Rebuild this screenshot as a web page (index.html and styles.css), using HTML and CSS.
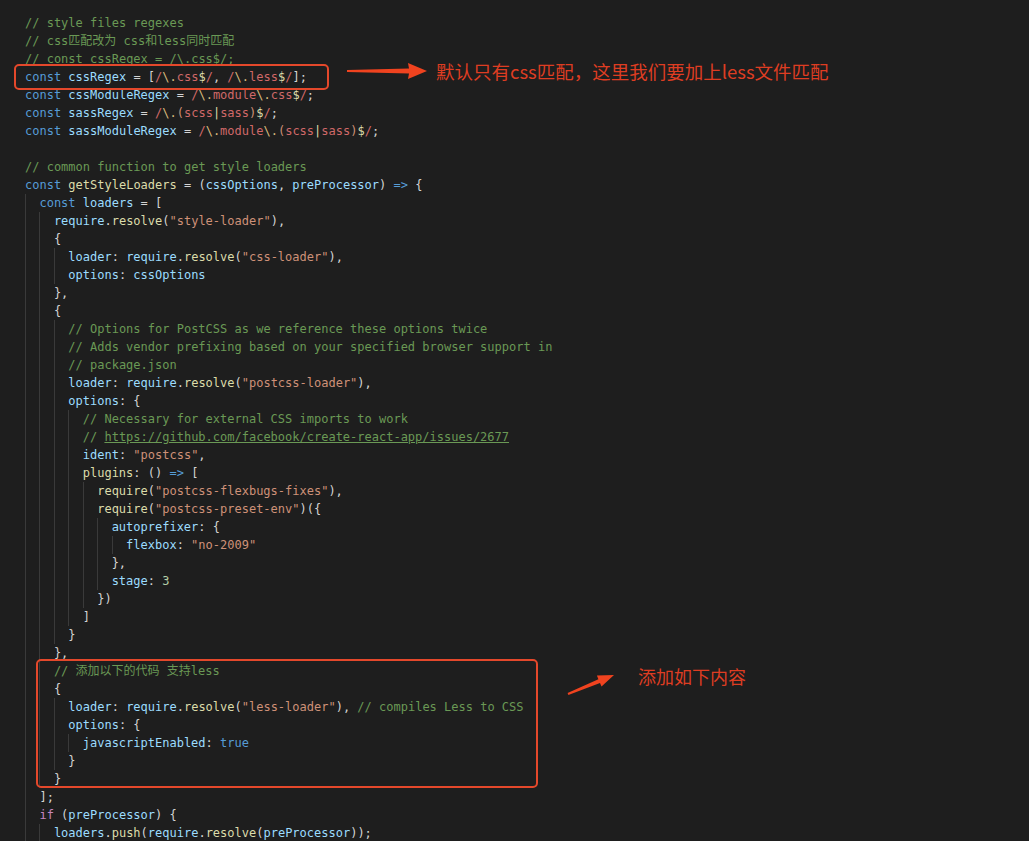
FILE: index.html
```html
<!DOCTYPE html>
<html>
  <head>
    <meta charset="UTF-8" />
    <title>webpack.config.js - less</title>
    <link rel="stylesheet" href="styles.css">
  </head>
  <body>
    <div class="editor">
      <div class="code">
        <div class="ln"><span class="c">// style files regexes</span></div>
        <div class="ln"><span class="c">// css匹配改为 css和less同时匹配</span></div>
        <div class="ln"><span class="c">// const cssRegex = /\.css$/;</span></div>
        <div class="ln"><span class="k">const</span> <span class="v">cssRegex</span> = [<span class="r">/<i>\.</i>css<b>$</b>/</span>, <span class="r">/<i>\.</i>less<b>$</b>/</span>];</div>
        <div class="ln"><span class="k">const</span> <span class="v">cssModuleRegex</span> = <span class="r">/<i>\.</i>module<i>\.</i>css<b>$</b>/</span>;</div>
        <div class="ln"><span class="k">const</span> <span class="v">sassRegex</span> = <span class="r">/<i>\.</i><u>(</u>scss<b>|</b>sass<u>)</u><b>$</b>/</span>;</div>
        <div class="ln"><span class="k">const</span> <span class="v">sassModuleRegex</span> = <span class="r">/<i>\.</i>module<i>\.</i><u>(</u>scss<b>|</b>sass<u>)</u><b>$</b>/</span>;</div>
        <div class="ln"></div>
        <div class="ln"><span class="c">// common function to get style loaders</span></div>
        <div class="ln"><span class="k">const</span> <span class="f">getStyleLoaders</span> = (<span class="v">cssOptions</span>, <span class="v">preProcessor</span>) <span class="k">=&gt;</span> {</div>
        <div class="ln"><span class="ig"></span><span class="k">const</span> <span class="v">loaders</span> = [</div>
        <div class="ln"><span class="ig"></span><span class="ig"></span><span class="v">require</span>.<span class="f">resolve</span>(<span class="s">"style-loader"</span>),</div>
        <div class="ln"><span class="ig"></span><span class="ig"></span>{</div>
        <div class="ln"><span class="ig"></span><span class="ig"></span><span class="ig"></span><span class="v">loader</span>: <span class="v">require</span>.<span class="f">resolve</span>(<span class="s">"css-loader"</span>),</div>
        <div class="ln"><span class="ig"></span><span class="ig"></span><span class="ig"></span><span class="v">options</span>: <span class="v">cssOptions</span></div>
        <div class="ln"><span class="ig"></span><span class="ig"></span>},</div>
        <div class="ln"><span class="ig"></span><span class="ig"></span>{</div>
        <div class="ln"><span class="ig"></span><span class="ig"></span><span class="ig"></span><span class="c">// Options for PostCSS as we reference these options twice</span></div>
        <div class="ln"><span class="ig"></span><span class="ig"></span><span class="ig"></span><span class="c">// Adds vendor prefixing based on your specified browser support in</span></div>
        <div class="ln"><span class="ig"></span><span class="ig"></span><span class="ig"></span><span class="c">// package.json</span></div>
        <div class="ln"><span class="ig"></span><span class="ig"></span><span class="ig"></span><span class="v">loader</span>: <span class="v">require</span>.<span class="f">resolve</span>(<span class="s">"postcss-loader"</span>),</div>
        <div class="ln"><span class="ig"></span><span class="ig"></span><span class="ig"></span><span class="v">options</span>: {</div>
        <div class="ln"><span class="ig"></span><span class="ig"></span><span class="ig"></span><span class="ig"></span><span class="c">// Necessary for external CSS imports to work</span></div>
        <div class="ln"><span class="ig"></span><span class="ig"></span><span class="ig"></span><span class="ig"></span><span class="c">// <span class="url">https://github.com/facebook/create-react-app/issues/2677</span></span></div>
        <div class="ln"><span class="ig"></span><span class="ig"></span><span class="ig"></span><span class="ig"></span><span class="v">ident</span>: <span class="s">"postcss"</span>,</div>
        <div class="ln"><span class="ig"></span><span class="ig"></span><span class="ig"></span><span class="ig"></span><span class="f">plugins</span>: () <span class="k">=&gt;</span> [</div>
        <div class="ln"><span class="ig"></span><span class="ig"></span><span class="ig"></span><span class="ig"></span><span class="ig"></span><span class="f">require</span>(<span class="s">"postcss-flexbugs-fixes"</span>),</div>
        <div class="ln"><span class="ig"></span><span class="ig"></span><span class="ig"></span><span class="ig"></span><span class="ig"></span><span class="f">require</span>(<span class="s">"postcss-preset-env"</span>)({</div>
        <div class="ln"><span class="ig"></span><span class="ig"></span><span class="ig"></span><span class="ig"></span><span class="ig"></span><span class="ig"></span><span class="v">autoprefixer</span>: {</div>
        <div class="ln"><span class="ig"></span><span class="ig"></span><span class="ig"></span><span class="ig"></span><span class="ig"></span><span class="ig"></span><span class="ig"></span><span class="v">flexbox</span>: <span class="s">"no-2009"</span></div>
        <div class="ln"><span class="ig"></span><span class="ig"></span><span class="ig"></span><span class="ig"></span><span class="ig"></span><span class="ig"></span>},</div>
        <div class="ln"><span class="ig"></span><span class="ig"></span><span class="ig"></span><span class="ig"></span><span class="ig"></span><span class="ig"></span><span class="v">stage</span>: <span class="n">3</span></div>
        <div class="ln"><span class="ig"></span><span class="ig"></span><span class="ig"></span><span class="ig"></span><span class="ig"></span>})</div>
        <div class="ln"><span class="ig"></span><span class="ig"></span><span class="ig"></span><span class="ig"></span>]</div>
        <div class="ln"><span class="ig"></span><span class="ig"></span><span class="ig"></span>}</div>
        <div class="ln"><span class="ig"></span><span class="ig"></span>},</div>
        <div class="ln"><span class="ig"></span><span class="ig"></span><span class="c">// 添加以下的代码 支持less</span></div>
        <div class="ln"><span class="ig"></span><span class="ig"></span>{</div>
        <div class="ln"><span class="ig"></span><span class="ig"></span><span class="ig"></span><span class="v">loader</span>: <span class="v">require</span>.<span class="f">resolve</span>(<span class="s">"less-loader"</span>), <span class="c">// compiles Less to CSS</span></div>
        <div class="ln"><span class="ig"></span><span class="ig"></span><span class="ig"></span><span class="v">options</span>: {</div>
        <div class="ln"><span class="ig"></span><span class="ig"></span><span class="ig"></span><span class="ig"></span><span class="v">javascriptEnabled</span>: <span class="k">true</span></div>
        <div class="ln"><span class="ig"></span><span class="ig"></span><span class="ig"></span>}</div>
        <div class="ln"><span class="ig"></span><span class="ig"></span>}</div>
        <div class="ln"><span class="ig"></span>];</div>
        <div class="ln"><span class="ig"></span><span class="x">if</span> (<span class="v">preProcessor</span>) {</div>
        <div class="ln"><span class="ig"></span><span class="ig"></span><span class="v">loaders</span>.<span class="f">push</span>(<span class="v">require</span>.<span class="f">resolve</span>(<span class="v">preProcessor</span>));</div>
      </div>

      <!-- annotations drawn over the screenshot -->
      <div class="mark mark-regex"></div>
      <div class="mark mark-less"></div>

      <svg class="arrow arrow-right" width="92" height="22" viewBox="0 0 92 22">
        <polygon points="2,10 64,8.5 63,3 82,11 63,19 64,13.5 2,12" />
      </svg>
      <div class="note note-regex">默认只有css匹配，这里我们要加上less文件匹配</div>

      <svg class="arrow arrow-up" width="58" height="32" viewBox="0 0 58 32">
        <polygon points="5.6,25.1 36.4,11.3 34.9,7.6 52,7 39.5,18.6 38,15 6.4,26.9" />
      </svg>
      <div class="note note-less">添加如下内容</div>
    </div>
  </body>
</html>
```

FILE: styles.css
```css
/* Editor background */
html, body {
  margin: 0;
  padding: 0;
  width: 100%;
  height: 100%;
  overflow: hidden;
  background: #1e1e1e;
}

.editor {
  position: relative;
  height: 100%;
}

/* Code lines */
.code {
  padding: 14px 0 0 25px;
  font-family: "DejaVu Sans Mono", "Noto Sans CJK SC", monospace;
  font-size: 12px;
  line-height: 18px;
  color: #d4d4d4;
}

.ln {
  height: 18px;
  white-space: pre;
}

/* indent guide, one per two spaces */
.ig {
  display: inline-block;
  width: 2ch;
  height: 18px;
  vertical-align: top;
  box-sizing: border-box;
  border-left: 1px solid #3a3a3a;
}

/* Syntax colours */
.c { color: #6a9955; }
.k { color: #569cd6; }
.v { color: #9cdcfe; }
.f { color: #dcdcaa; }
.s { color: #ce9178; }
.n { color: #b5cea8; }
.x { color: #c586c0; }
.url { text-decoration: underline; }

.r { color: #d16969; }
.r i { font-style: normal; color: #d7ba7d; }
.r b { font-weight: normal; color: #dcdcaa; }
.r u { text-decoration: none; color: #ce9178; }

/* Red annotation boxes */
.mark {
  position: absolute;
  border: 2.5px solid #e4482b;
  border-radius: 5px;
  box-sizing: border-box;
}

.mark-regex {
  left: 14px;
  top: 64px;
  width: 315px;
  height: 26px;
}

.mark-less {
  left: 36px;
  top: 659px;
  width: 502px;
  height: 129px;
}

.arrow {
  position: absolute;
  fill: #f0431f;
}

.arrow-right {
  left: 345px;
  top: 60px;
}

.arrow-up {
  left: 562px;
  top: 668px;
}

.note {
  position: absolute;
  font-family: "Noto Sans CJK SC", sans-serif;
  font-size: 18px;
  line-height: 18px;
  color: #de3d22;
  white-space: nowrap;
}

.note-regex {
  left: 436px;
  top: 62px;
  font-size: 18.5px;
}

.note-less {
  left: 638px;
  top: 667px;
}
```
